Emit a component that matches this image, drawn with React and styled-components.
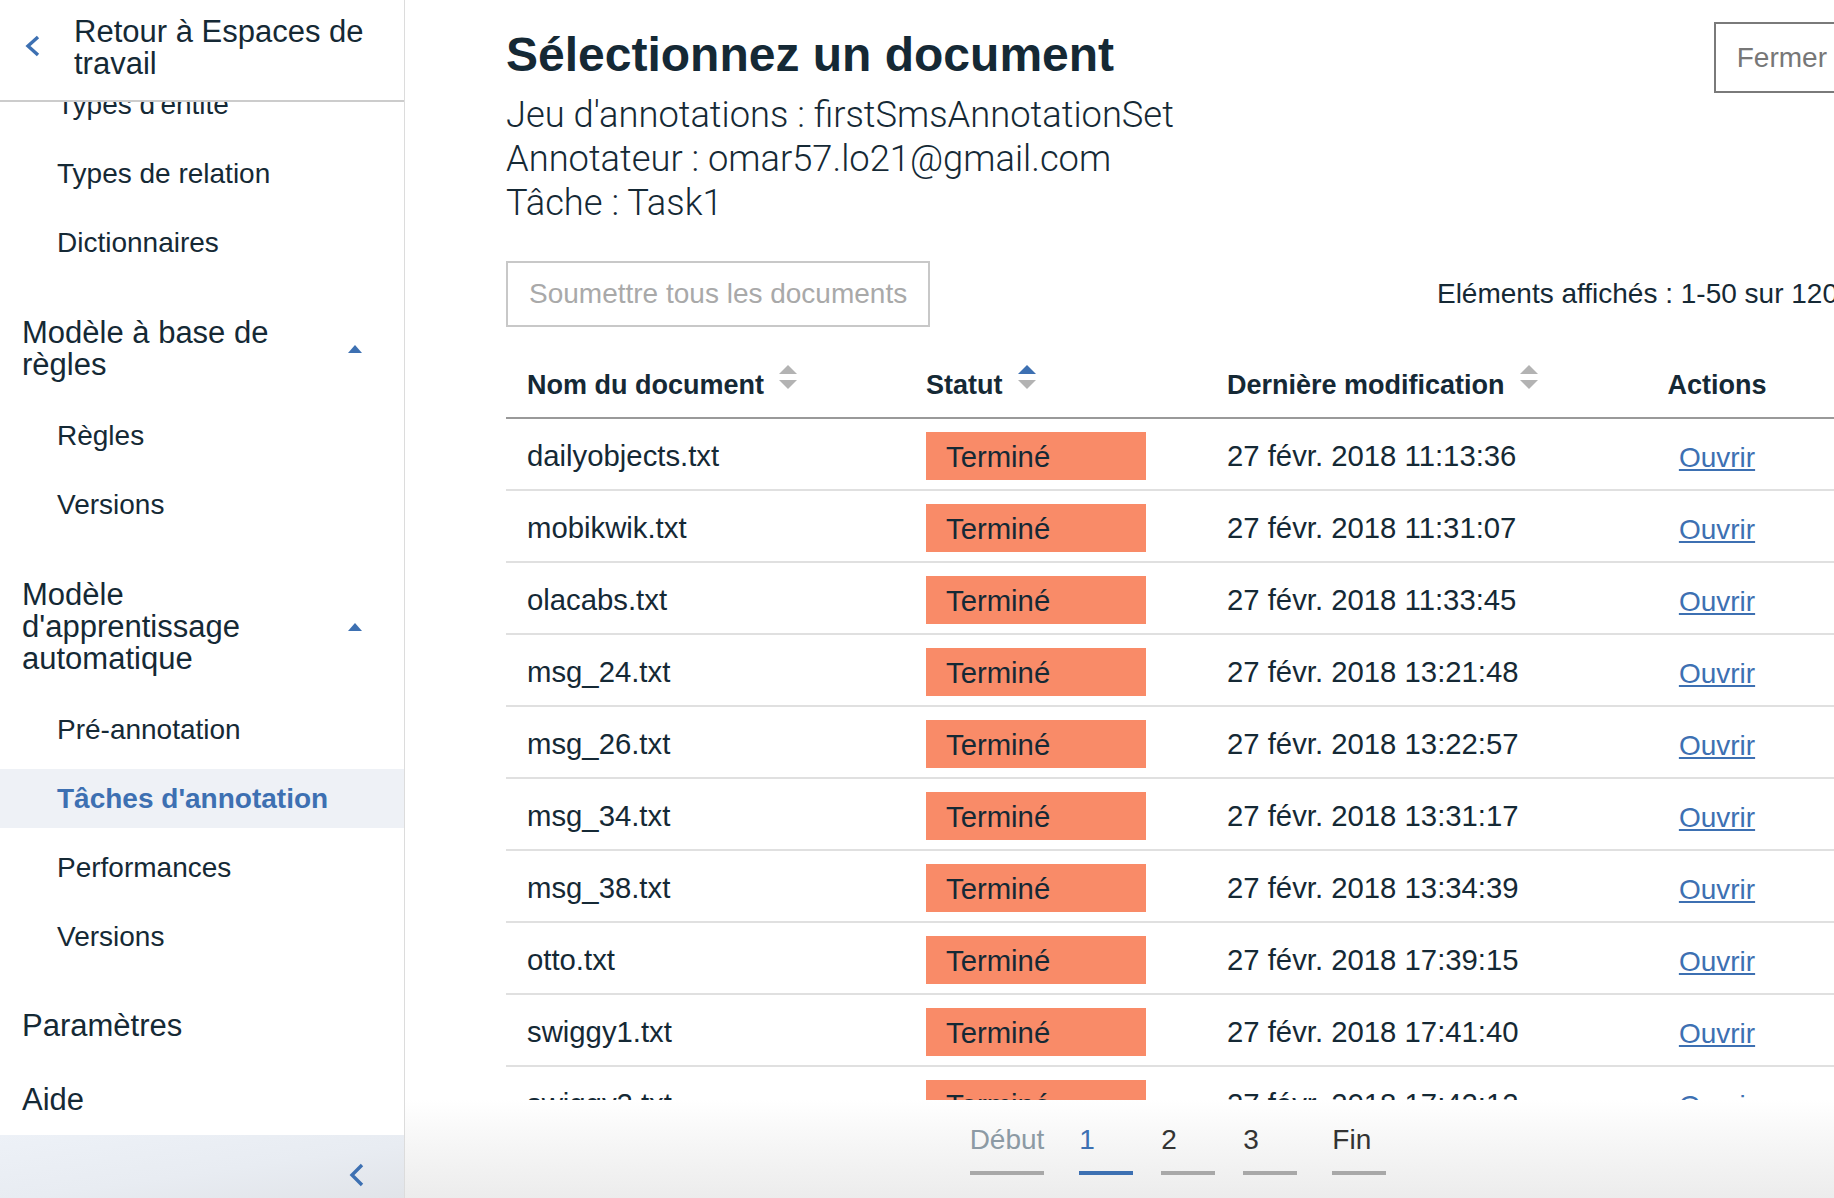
import React, { useLayoutEffect, useRef } from 'react';
import styled, { createGlobalStyle } from 'styled-components';

const ink = '#152935';
const blue = '#3d70b2';

const GlobalStyle = createGlobalStyle`
  html, body {
    margin: 0;
    padding: 0;
    height: 100%;
    overflow: hidden;
  }
  body {
    font-family: "Liberation Sans", Arial, sans-serif;
    color: ${ink};
    background: #fff;
  }
  * {
    box-sizing: border-box;
  }
`;

const Page = styled.div`
  display: flex;
  width: 100vw;
  height: 100vh;
  overflow: hidden;
`;

/* ---------- sidebar ---------- */

const Sidebar = styled.aside`
  width: 405px;
  flex-shrink: 0;
  display: flex;
  flex-direction: column;
  border-right: 1px solid #dcdcdc;
  background: #fff;
`;

const BackHeader = styled.div`
  height: 102px;
  flex-shrink: 0;
  display: flex;
  align-items: flex-start;
  gap: 34px;
  padding: 16px 20px 0 25px;
  border-bottom: 2px solid #cccccc;
  font-size: 31px;
  line-height: 32px;
  cursor: pointer;
`;

const BackChevron = styled.svg`
  flex-shrink: 0;
  margin-top: 19px;
`;

const NavScroll = styled.nav`
  position: relative;
  flex: 1;
  min-height: 0;
  display: flex;
  flex-direction: column;
  overflow-y: auto;
  scrollbar-width: none;
  padding-bottom: 60px;
  &::-webkit-scrollbar {
    display: none;
  }
`;

const Heading = styled.div`
  flex-shrink: 0;
  display: flex;
  align-items: center;
  justify-content: space-between;
  margin: 35px 0 25px;
  padding: 0 42px 0 22px;
  font-size: 31px;
  line-height: 32px;
`;

const HeadingText = styled.span`
  max-width: 300px;
`;

const SubItem = styled.div`
  flex-shrink: 0;
  height: 59px;
  margin-bottom: 10px;
  display: flex;
  align-items: center;
  padding-left: 57px;
  font-size: 28px;
  background: ${(p) => (p.$active ? '#eef1f6' : 'transparent')};
  color: ${(p) => (p.$active ? blue : ink)};
  font-weight: ${(p) => (p.$active ? 700 : 400)};
`;

const TopLinks = styled.div`
  flex-shrink: 0;
  margin-top: 13px;
`;

const TopLink = styled.div`
  padding: 21px 22px;
  font-size: 31px;
  line-height: 32px;
`;

const SidebarFooter = styled.div`
  height: 63px;
  flex-shrink: 0;
  display: flex;
  justify-content: flex-end;
  align-items: flex-start;
  padding: 28px 40px 0 0;
  background: linear-gradient(172deg, #edf1f7 0%, #e8ecf2 55%, #e1e4e9 100%);
`;

/* ---------- main ---------- */

const Main = styled.main`
  flex: 1;
  min-width: 0;
  display: flex;
  flex-direction: column;
  overflow: hidden;
`;

const Content = styled.div`
  flex: 1;
  min-height: 0;
  padding: 22px 0 0 101px;
  display: flex;
`;

const Column = styled.div`
  width: 1344px;
  flex-shrink: 0;
  display: flex;
  flex-direction: column;
`;

const TitleRow = styled.div`
  display: flex;
  justify-content: space-between;
  align-items: flex-start;
`;

const Title = styled.h1`
  margin: 5px 0 0;
  font-size: 48px;
  line-height: 56px;
  font-weight: 700;
`;

const Meta = styled.div`
  margin-top: 10px;
  font-family: Roboto, "Liberation Sans", sans-serif;
  font-weight: 300;
  font-size: 36.3px;
  line-height: 44px;
`;

const OutlineButton = styled.button`
  height: ${(p) => p.$height}px;
  padding: 0 21px;
  background: #fff;
  border: 2px solid ${(p) => p.$border};
  color: ${(p) => p.$color};
  font-family: "Liberation Sans", Arial, sans-serif;
  font-size: 28px;
  cursor: pointer;
`;

const Toolbar = styled.div`
  margin-top: 36px;
  height: 66px;
  display: flex;
  justify-content: space-between;
  align-items: center;
`;

const Count = styled.span`
  font-size: 28px;
  margin-right: 12px;
`;

const Table = styled.div`
  margin-top: 26px;
  flex: 1;
  min-height: 0;
  display: flex;
  flex-direction: column;
`;

const columns = '399px 301px 440px 142px 1fr';

const HeaderRow = styled.div`
  height: 66px;
  flex-shrink: 0;
  display: grid;
  grid-template-columns: ${columns};
  border-bottom: 2px solid #999999;
`;

const HeadCell = styled.div`
  display: flex;
  align-items: center;
  justify-content: ${(p) => (p.$center ? 'center' : 'flex-start')};
  padding-left: ${(p) => (p.$center ? 0 : 21)}px;
  font-size: 27px;
  font-weight: 700;
`;

const SortIcon = styled.svg`
  margin-left: 15px;
  margin-bottom: 16px;
`;

const Body = styled.div`
  flex: 1;
  min-height: 0;
  overflow: hidden;
`;

const Row = styled.div`
  height: 72px;
  display: grid;
  grid-template-columns: ${columns};
  align-items: center;
  border-bottom: 2px solid #e0e0e0;
`;

const Cell = styled.div`
  display: flex;
  justify-content: ${(p) => (p.$center ? 'center' : 'flex-start')};
  padding-left: ${(p) => (p.$center ? 0 : 21)}px;
  padding-top: 3px;
  font-size: 29.3px;
  white-space: nowrap;
`;

const Badge = styled.span`
  width: 220px;
  height: 48px;
  margin-top: 1px;
  display: flex;
  align-items: center;
  padding: 1px 0 0 20px;
  background: #f98b68;
  font-size: 29.3px;
`;

const OpenLink = styled.a`
  padding-top: 5px;
  color: ${blue};
  text-decoration: underline;
  font-size: 28px;
  cursor: pointer;
`;

const Footer = styled.div`
  height: 98px;
  flex-shrink: 0;
  padding-left: 101px;
  background: linear-gradient(180deg, #ffffff 0%, #f6f6f6 45%, #ececec 100%);
`;

const Pagination = styled.div`
  width: 1344px;
  display: flex;
  justify-content: center;
  gap: 28px;
  padding-top: 23px;
`;

const PageItem = styled.span`
  min-width: 54px;
  padding-bottom: 14px;
  margin: ${(p) => p.$margin || '0'};
  border-bottom: 4px solid ${(p) => (p.$active ? blue : '#a8a8a8')};
  color: ${(p) => p.$color};
  font-size: 28px;
  line-height: 34px;
  cursor: pointer;
`;

/* ---------- small drawings ---------- */

const Chevron = ({ w, h }) => (
  <svg width={w} height={h} viewBox={`0 0 ${w} ${h}`}>
    <polyline
      points={`${w - 2},2 3,${h / 2} ${w - 2},${h - 2}`}
      fill="none"
      stroke={blue}
      strokeWidth="3.4"
    />
  </svg>
);

const Caret = () => (
  <svg width="14" height="8" viewBox="0 0 14 8">
    <polygon points="7,0 14,8 0,8" fill={blue} />
  </svg>
);

const Sort = ({ up = '#b3b3b3' }) => (
  <SortIcon width="18" height="24" viewBox="0 0 18 24">
    <polygon points="9,0 18,9 0,9" fill={up} />
    <polygon points="0,15 18,15 9,24" fill="#b3b3b3" />
  </SortIcon>
);

const documents = [
  ['dailyobjects.txt', '27 févr. 2018 11:13:36'],
  ['mobikwik.txt', '27 févr. 2018 11:31:07'],
  ['olacabs.txt', '27 févr. 2018 11:33:45'],
  ['msg_24.txt', '27 févr. 2018 13:21:48'],
  ['msg_26.txt', '27 févr. 2018 13:22:57'],
  ['msg_34.txt', '27 févr. 2018 13:31:17'],
  ['msg_38.txt', '27 févr. 2018 13:34:39'],
  ['otto.txt', '27 févr. 2018 17:39:15'],
  ['swiggy1.txt', '27 févr. 2018 17:41:40'],
  ['swiggy2.txt', '27 févr. 2018 17:42:12'],
  ['zomato.txt', '27 févr. 2018 17:44:03'],
];

const App = () => {
  const navRef = useRef(null);
  const anchorRef = useRef(null);

  // la liste de navigation est affichée déjà défilée jusqu'à « Types d'entité »
  useLayoutEffect(() => {
    if (navRef.current && anchorRef.current) {
      navRef.current.scrollTop = anchorRef.current.offsetTop + 27;
    }
  }, []);

  return (
    <Page>
      <GlobalStyle />

      <Sidebar>
        <BackHeader>
          <BackChevron width="15" height="22" viewBox="0 0 15 22">
            <polyline points="13,2 3,11 13,20" fill="none" stroke={blue} strokeWidth="3.4" />
          </BackChevron>
          <span>Retour à Espaces de travail</span>
        </BackHeader>

        <NavScroll ref={navRef}>
          <Heading>
            <HeadingText>Actifs</HeadingText>
            <Caret />
          </Heading>
          <SubItem>Documents</SubItem>
          <SubItem ref={anchorRef}>Types d'entité</SubItem>
          <SubItem>Types de relation</SubItem>
          <SubItem>Dictionnaires</SubItem>

          <Heading>
            <HeadingText>Modèle à base de règles</HeadingText>
            <Caret />
          </Heading>
          <SubItem>Règles</SubItem>
          <SubItem>Versions</SubItem>

          <Heading>
            <HeadingText>Modèle d'apprentissage automatique</HeadingText>
            <Caret />
          </Heading>
          <SubItem>Pré-annotation</SubItem>
          <SubItem $active>Tâches d'annotation</SubItem>
          <SubItem>Performances</SubItem>
          <SubItem>Versions</SubItem>

          <TopLinks>
            <TopLink>Paramètres</TopLink>
            <TopLink>Aide</TopLink>
          </TopLinks>
        </NavScroll>

        <SidebarFooter>
          <Chevron w={15} h={24} />
        </SidebarFooter>
      </Sidebar>

      <Main>
        <Content>
          <Column>
            <TitleRow>
              <div>
                <Title>Sélectionnez un document</Title>
                <Meta>
                  <div>Jeu d'annotations : firstSmsAnnotationSet</div>
                  <div>Annotateur : omar57.lo21@gmail.com</div>
                  <div>Tâche : Task1</div>
                </Meta>
              </div>
              <OutlineButton $height={71} $border="#7a7a7a" $color="#777777">
                Fermer
              </OutlineButton>
            </TitleRow>

            <Toolbar>
              <OutlineButton $height={66} $border="#c8c8c8" $color="#a9a9a9">
                Soumettre tous les documents
              </OutlineButton>
              <Count>Eléments affichés : 1-50 sur 120</Count>
            </Toolbar>

            <Table>
              <HeaderRow>
                <HeadCell>
                  Nom du document
                  <Sort />
                </HeadCell>
                <HeadCell>
                  Statut
                  <Sort up={blue} />
                </HeadCell>
                <HeadCell>
                  Dernière modification
                  <Sort />
                </HeadCell>
                <HeadCell $center>Actions</HeadCell>
                <HeadCell />
              </HeaderRow>
              <Body>
                {documents.map(([name, date]) => (
                  <Row key={name}>
                    <Cell>{name}</Cell>
                    <Cell>
                      <Badge>Terminé</Badge>
                    </Cell>
                    <Cell>{date}</Cell>
                    <Cell $center>
                      <OpenLink>Ouvrir</OpenLink>
                    </Cell>
                    <Cell />
                  </Row>
                ))}
              </Body>
            </Table>
          </Column>
        </Content>

        <Footer>
          <Pagination>
            <PageItem $color="#8c9aa4" $margin="0 7px 0 0">Début</PageItem>
            <PageItem $color={blue} $active>1</PageItem>
            <PageItem $color="#333333">2</PageItem>
            <PageItem $color="#333333">3</PageItem>
            <PageItem $color="#333333" $margin="0 0 0 7px">Fin</PageItem>
          </Pagination>
        </Footer>
      </Main>
    </Page>
  );
};

export default App;
